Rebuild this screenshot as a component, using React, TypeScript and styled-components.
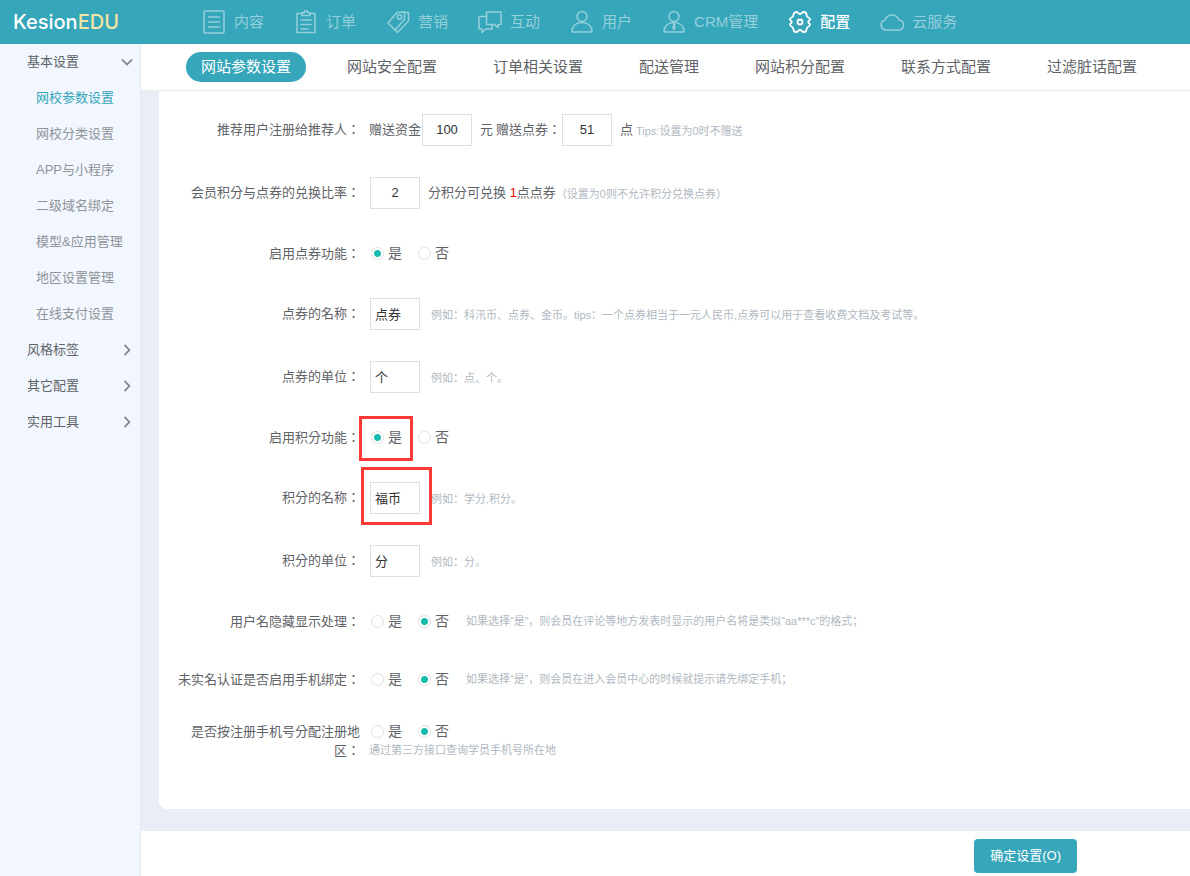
import React from "react";
import styled, { createGlobalStyle, css } from "styled-components";

const color = {
  brand: "#36a6ba",
  side: "#f2f7ff",
  canvas: "#e9edf6",
  line: "#e8eaec",
  text: "#5f6368",
  muted: "#8f9499",
  tip: "#b0b8c1",
  field: "#d9e2e3",
  dot: "#18bbab",
  mark: "#fb3a38",
};

const GlobalStyle = createGlobalStyle`
  *, *::before, *::after { box-sizing: border-box; }
  body {
    margin: 0;
    color: ${color.text};
    background: ${color.side};
    font: 13px/19px "Liberation Sans", "Noto Sans CJK SC", sans-serif;
  }
  a { color: inherit; text-decoration: none; }
  ul { margin: 0; padding: 0; list-style: none; }
`;

const Page = styled.div`
  display: flex;
  flex-direction: column;
  min-height: 100vh;
`;

/* ---------- header ---------- */

const Header = styled.header`
  display: flex;
  align-items: center;
  height: 44px;
  flex: none;
  padding-left: 13px;
  background: ${color.brand};
  overflow: hidden;
`;

const Logo = styled.a`
  width: 189px;
  flex: none;
  color: #fff;
  font-family: Inter, "Liberation Sans", sans-serif;
  font-size: 20px;
  line-height: 24px;
  font-weight: 500;
`;

const LogoAccent = styled.span`
  color: #f3e5a4;
`;

const TopNav = styled.nav`
  display: flex;
  gap: 30px;
`;

const TopLink = styled.a<{ $active?: boolean }>`
  display: flex;
  align-items: center;
  gap: 8px;
  flex: none;
  color: ${(p) => (p.$active ? "#fff" : "#95cfda")};
  font-size: 15px;
  line-height: 22px;
  white-space: nowrap;
  font-weight: ${(p) => (p.$active ? 500 : 400)};
`;

const TopIcon = styled.svg`
  width: 24px;
  height: 24px;
  fill: none;
  stroke: currentColor;
  stroke-width: 1.5;
  stroke-linejoin: round;
  stroke-linecap: round;
`;

/* ---------- side menu ---------- */

const Body = styled.div`
  display: flex;
  flex: 1;
`;

const Side = styled.nav`
  width: 141px;
  flex: none;
  background: ${color.side};
  border-right: 1px solid ${color.line};
`;

const Group = styled.button`
  display: flex;
  align-items: center;
  justify-content: space-between;
  width: 100%;
  height: 36px;
  padding: 0 7px 2px 27px;
  border: 0;
  background: none;
  color: ${color.text};
  font: inherit;
  text-align: left;
`;

const Chevron = styled.svg`
  width: 12px;
  height: 12px;
  margin-top: 2px;
  fill: none;
  stroke: #878c92;
  stroke-width: 1.8;
`;

const SideLink = styled.a<{ $active?: boolean }>`
  display: flex;
  align-items: center;
  height: 36px;
  padding: 0 0 2px 36px;
  white-space: nowrap;
  color: ${(p) => (p.$active ? color.brand : color.muted)};
`;

/* ---------- main column ---------- */

const Main = styled.main`
  display: flex;
  flex-direction: column;
  flex: 1;
  min-width: 0;
  background: ${color.canvas};
`;

const Tabs = styled.nav`
  display: flex;
  align-items: center;
  gap: 26px;
  height: 47px;
  flex: none;
  padding-left: 45px;
  background: #fff;
  border-bottom: 1px solid ${color.line};
  overflow: hidden;
`;

const Tab = styled.a<{ $active?: boolean }>`
  flex: none;
  padding: 0 15px;
  border-radius: 15px;
  font-size: 15px;
  line-height: 30px;
  white-space: nowrap;
  ${(p) =>
    p.$active &&
    css`
      background: ${color.brand};
      color: #fff;
    `}
`;

const Card = styled.div`
  flex: 1;
  margin: 0 0 21px 18px;
  padding: 7px 0 35px 16px;
  background: #fff;
  border-bottom-left-radius: 8px;
`;

const Row = styled.div<{ $size?: "field" | "choice" | "double" }>`
  display: flex;
  align-items: center;
  min-height: ${(p) =>
    p.$size === "choice" ? "58px" : p.$size === "double" ? "66px" : "63px"};
`;

/* The TC face centres the full-width colon in its cell */
const labelFont = css`
  padding-bottom: 2px;
  font-family: "Noto Sans CJK TC", sans-serif;
`;

const RowLabel = styled.label`
  width: 185px;
  flex: none;
  margin-right: 9px;
  text-align: right;
  ${labelFont}
`;

const Field = styled.div`
  display: flex;
  align-items: center;
  white-space: nowrap;
`;

const FieldStack = styled.div`
  display: flex;
  flex-direction: column;
`;

const TextBox = styled.input<{ $center?: boolean }>`
  width: 50px;
  height: 32px;
  margin-left: 1px;
  padding: 0 4px;
  border: 1px solid ${color.field};
  border-radius: 0;
  outline: 0;
  background: #fff;
  color: #333;
  font: inherit;
  text-align: ${(p) => (p.$center ? "center" : "left")};
`;

const After = styled.span`
  margin-left: 8px;
`;

const InlineLabel = styled.label`
  margin-left: 8px;
  ${labelFont}
`;

const Red = styled.span`
  color: #f00;
`;

const Tip = styled.span<{ $gap?: number; $low?: boolean }>`
  margin-left: ${(p) => p.$gap ?? 0}px;
  padding-top: ${(p) => (p.$low ? "3px" : "0")};
  color: ${color.tip};
  font-size: 11px;
  line-height: 19px;
  white-space: nowrap;
`;

const Choices = styled.div`
  display: flex;
  gap: 16px;
  padding-left: 2px;
`;

const Choice = styled.label`
  display: flex;
  align-items: center;
  gap: 4px;
  position: relative;
  font-size: 14px;
  line-height: 19px;
`;

const Radio = styled.input`
  appearance: none;
  width: 13px;
  height: 13px;
  margin: 0;
  border: 1px solid #dce1e1;
  border-radius: 50%;
  background: #fff;
  &:checked {
    background: radial-gradient(circle, ${color.dot} 3px, #fff 4px);
  }
`;

const Marked = styled.span`
  display: flex;
  position: relative;
`;

const Mark = styled.span<{ $inset: string }>`
  position: absolute;
  inset: ${(p) => p.$inset};
  border: 3px solid ${color.mark};
  pointer-events: none;
`;

const Footer = styled.footer`
  display: flex;
  align-items: center;
  justify-content: flex-end;
  height: 46px;
  flex: none;
  padding: 4px 113px 0 0;
  background: #fff;
  border-top: 1px solid ${color.line};
`;

const Submit = styled.button`
  height: 34px;
  padding: 0 16px;
  border: 0;
  border-radius: 4px;
  background: ${color.brand};
  color: #fff;
  font: inherit;
`;

/* ---------- data ---------- */

const topItems: { label: string; active?: boolean; icon: React.ReactNode }[] = [
  {
    label: "内容",
    icon: (
      <>
        <rect x="2" y="1" width="20" height="22" rx="1" />
        <path d="M6.500 7h11M6.500 12h11M6.500 17h11" />
      </>
    ),
  },
  {
    label: "订单",
    icon: (
      <>
        <path d="M8 3.500H3v19h18v-19h-5" />
        <path d="M8 5.500v-3h2.500V1h3v1.500H16v3z" />
        <path d="M7 10h10M7 14.500h10M7 19h7" />
      </>
    ),
  },
  {
    label: "营销",
    icon: (
      <>
        <path d="M2 13 11 2.500l7.500-.5v7.500L9 20z" />
        <path d="M18.500 2.500H22.500V11L11.500 22.500 9 20" />
        <circle cx="13.500" cy="7" r="2.200" />
      </>
    ),
  },
  {
    label: "互动",
    icon: (
      <>
        <path d="M8.500 2h14.500v12.500h-3v3l-3.500-3h-8z" />
        <path d="M8.500 6.500H1V19h3v3.500L8 19h6v-4" />
      </>
    ),
  },
  {
    label: "用户",
    icon: (
      <>
        <circle cx="12" cy="6.500" r="5" />
        <path d="M2 22c0-6 4-9.500 10-9.500S22 16 22 22z" />
      </>
    ),
  },
  {
    label: "CRM管理",
    icon: (
      <>
        <circle cx="12" cy="6.500" r="5" />
        <path d="M2 22c0-6 4-9.500 10-9.500S22 16 22 22z" />
        <path d="m12 13-1 5 1 1.500 1-1.500z" />
      </>
    ),
  },
  {
    label: "配置",
    active: true,
    icon: (
      <>
        <path
          strokeWidth="1.800"
          d="M8.500 2C10 2 10 4 12 4s2-2 3.500-2 3 1 3 2.500c0 2 .5 2.500 2 3s1.500 1 1.500 2-1.800 1-1.800 2.500S22 13.500 22 14.500s0 1.500-1.500 2-2 1-2 3c0 1.500-1.500 2.500-3 2.500S14 20 12 20s-2 2-3.500 2-3-1-3-2.500c0-2-.5-2.500-2-3s-1.500-1-1.500-2S3.800 13.500 3.800 12 2 10.500 2 9.500s0-1.500 1.500-2 2-1 2-3C5.500 3 7 2 8.500 2z"
        />
        <circle cx="12" cy="12" r="2.500" strokeWidth="1.800" />
      </>
    ),
  },
  {
    label: "云服务",
    icon: (
      <path d="M6 20a5 5 0 0 1-.8-9.900A7 7 0 0 1 18.700 10 5 5 0 0 1 18.500 20z" />
    ),
  },
];

const sideItems = [
  "网校参数设置",
  "网校分类设置",
  "APP与小程序",
  "二级域名绑定",
  "模型&应用管理",
  "地区设置管理",
  "在线支付设置",
];

const tabs = [
  "网站参数设置",
  "网站安全配置",
  "订单相关设置",
  "配送管理",
  "网站积分配置",
  "联系方式配置",
  "过滤脏话配置",
];

/* ---------- form pieces ---------- */

function YesNo({
  name,
  value,
  marked,
}: {
  name: string;
  value: "yes" | "no";
  marked?: boolean;
}) {
  return (
    <Choices role="radiogroup" aria-labelledby={`${name}-label`}>
      <Choice>
        <Radio type="radio" name={name} defaultChecked={value === "yes"} />是
        {marked && <Mark $inset="-12px -11px -14px -12px" />}
      </Choice>
      <Choice>
        <Radio type="radio" name={name} defaultChecked={value === "no"} />否
      </Choice>
    </Choices>
  );
}

function ChoiceRow(props: {
  name: string;
  label: string;
  value: "yes" | "no";
  tip?: string;
  marked?: boolean;
}) {
  return (
    <Row $size="choice">
      <RowLabel as="span" id={`${props.name}-label`}>
        {props.label}：
      </RowLabel>
      <Field>
        <YesNo name={props.name} value={props.value} marked={props.marked} />
        {props.tip && <Tip $gap={17}>{props.tip}</Tip>}
      </Field>
    </Row>
  );
}

function TextRow(props: {
  name: string;
  label: string;
  value: string;
  tip: string;
  marked?: boolean;
}) {
  return (
    <Row>
      <RowLabel htmlFor={props.name}>{props.label}：</RowLabel>
      <Field>
        <Marked>
          <TextBox id={props.name} defaultValue={props.value} />
          {props.marked && <Mark $inset="-15px -12px -11px -8px" />}
        </Marked>
        <Tip $gap={11} $low>
          {props.tip}
        </Tip>
      </Field>
    </Row>
  );
}

export default function App() {
  return (
    <Page>
      <GlobalStyle />
      <Header>
        <Logo href="#">
          Kesion<LogoAccent>EDU</LogoAccent>
        </Logo>
        <TopNav>
          {topItems.map((item) => (
            <TopLink key={item.label} href="#" $active={item.active}>
              <TopIcon viewBox="0 0 24 24" aria-hidden="true">
                {item.icon}
              </TopIcon>
              {item.label}
            </TopLink>
          ))}
        </TopNav>
      </Header>
      <Body>
        <Side>
          <Group type="button">
            基本设置
            <Chevron viewBox="0 0 12 12">
              <path d="m1 3.500 5 5 5-5" />
            </Chevron>
          </Group>
          <ul>
            {sideItems.map((label, i) => (
              <li key={label}>
                <SideLink href="#" $active={i === 0}>
                  {label}
                </SideLink>
              </li>
            ))}
          </ul>
          {["风格标签", "其它配置", "实用工具"].map((label) => (
            <Group type="button" key={label}>
              {label}
              <Chevron viewBox="0 0 12 12">
                <path d="m3.500 1 5 5-5 5" />
              </Chevron>
            </Group>
          ))}
        </Side>
        <Main>
          <Tabs>
            {tabs.map((label, i) => (
              <Tab key={label} href="#" $active={i === 0}>
                {label}
              </Tab>
            ))}
          </Tabs>
          <Card as="form">
            <Row>
              <RowLabel htmlFor="money">推荐用户注册给推荐人：</RowLabel>
              <Field>
                赠送资金
                <TextBox id="money" $center defaultValue="100" />
                <InlineLabel htmlFor="coupon">元 赠送点券：</InlineLabel>
                <TextBox id="coupon" $center defaultValue="51" />
                <After>点</After>
                <Tip $gap={3} $low>
                  Tips:设置为0时不赠送
                </Tip>
              </Field>
            </Row>
            <Row>
              <RowLabel htmlFor="ratio">会员积分与点券的兑换比率：</RowLabel>
              <Field>
                <TextBox id="ratio" $center defaultValue="2" />
                <After>
                  分积分可兑换 <Red>1</Red>点点券
                </After>
                <Tip $low>（设置为0则不允许积分兑换点券）</Tip>
              </Field>
            </Row>
            <ChoiceRow name="coupon-on" label="启用点券功能" value="yes" />
            <TextRow
              name="coupon-name"
              label="点券的名称"
              value="点券"
              tip="例如：科汛币、点券、金币。tips：一个点券相当于一元人民币,点券可以用于查看收费文档及考试等。"
            />
            <TextRow
              name="coupon-unit"
              label="点券的单位"
              value="个"
              tip="例如：点、个。"
            />
            <ChoiceRow
              name="score-on"
              label="启用积分功能"
              value="yes"
              marked
            />
            <TextRow
              name="score-name"
              label="积分的名称"
              value="福币"
              tip="例如：学分,积分。"
              marked
            />
            <TextRow
              name="score-unit"
              label="积分的单位"
              value="分"
              tip="例如：分。"
            />
            <ChoiceRow
              name="hide-name"
              label="用户名隐藏显示处理"
              value="no"
              tip="如果选择“是”，则会员在评论等地方发表时显示的用户名将是类似“aa***c”的格式；"
            />
            <ChoiceRow
              name="bind-phone"
              label="未实名认证是否启用手机绑定"
              value="no"
              tip="如果选择“是”，则会员在进入会员中心的时候就提示请先绑定手机；"
            />
            <Row $size="double">
              <RowLabel as="span" id="by-region-label">
                是否按注册手机号分配注册地区：
              </RowLabel>
              <FieldStack>
                <YesNo name="by-region" value="no" />
                <Tip>通过第三方接口查询学员手机号所在地</Tip>
              </FieldStack>
            </Row>
          </Card>
          <Footer>
            <Submit type="button">确定设置(O)</Submit>
          </Footer>
        </Main>
      </Body>
    </Page>
  );
}
